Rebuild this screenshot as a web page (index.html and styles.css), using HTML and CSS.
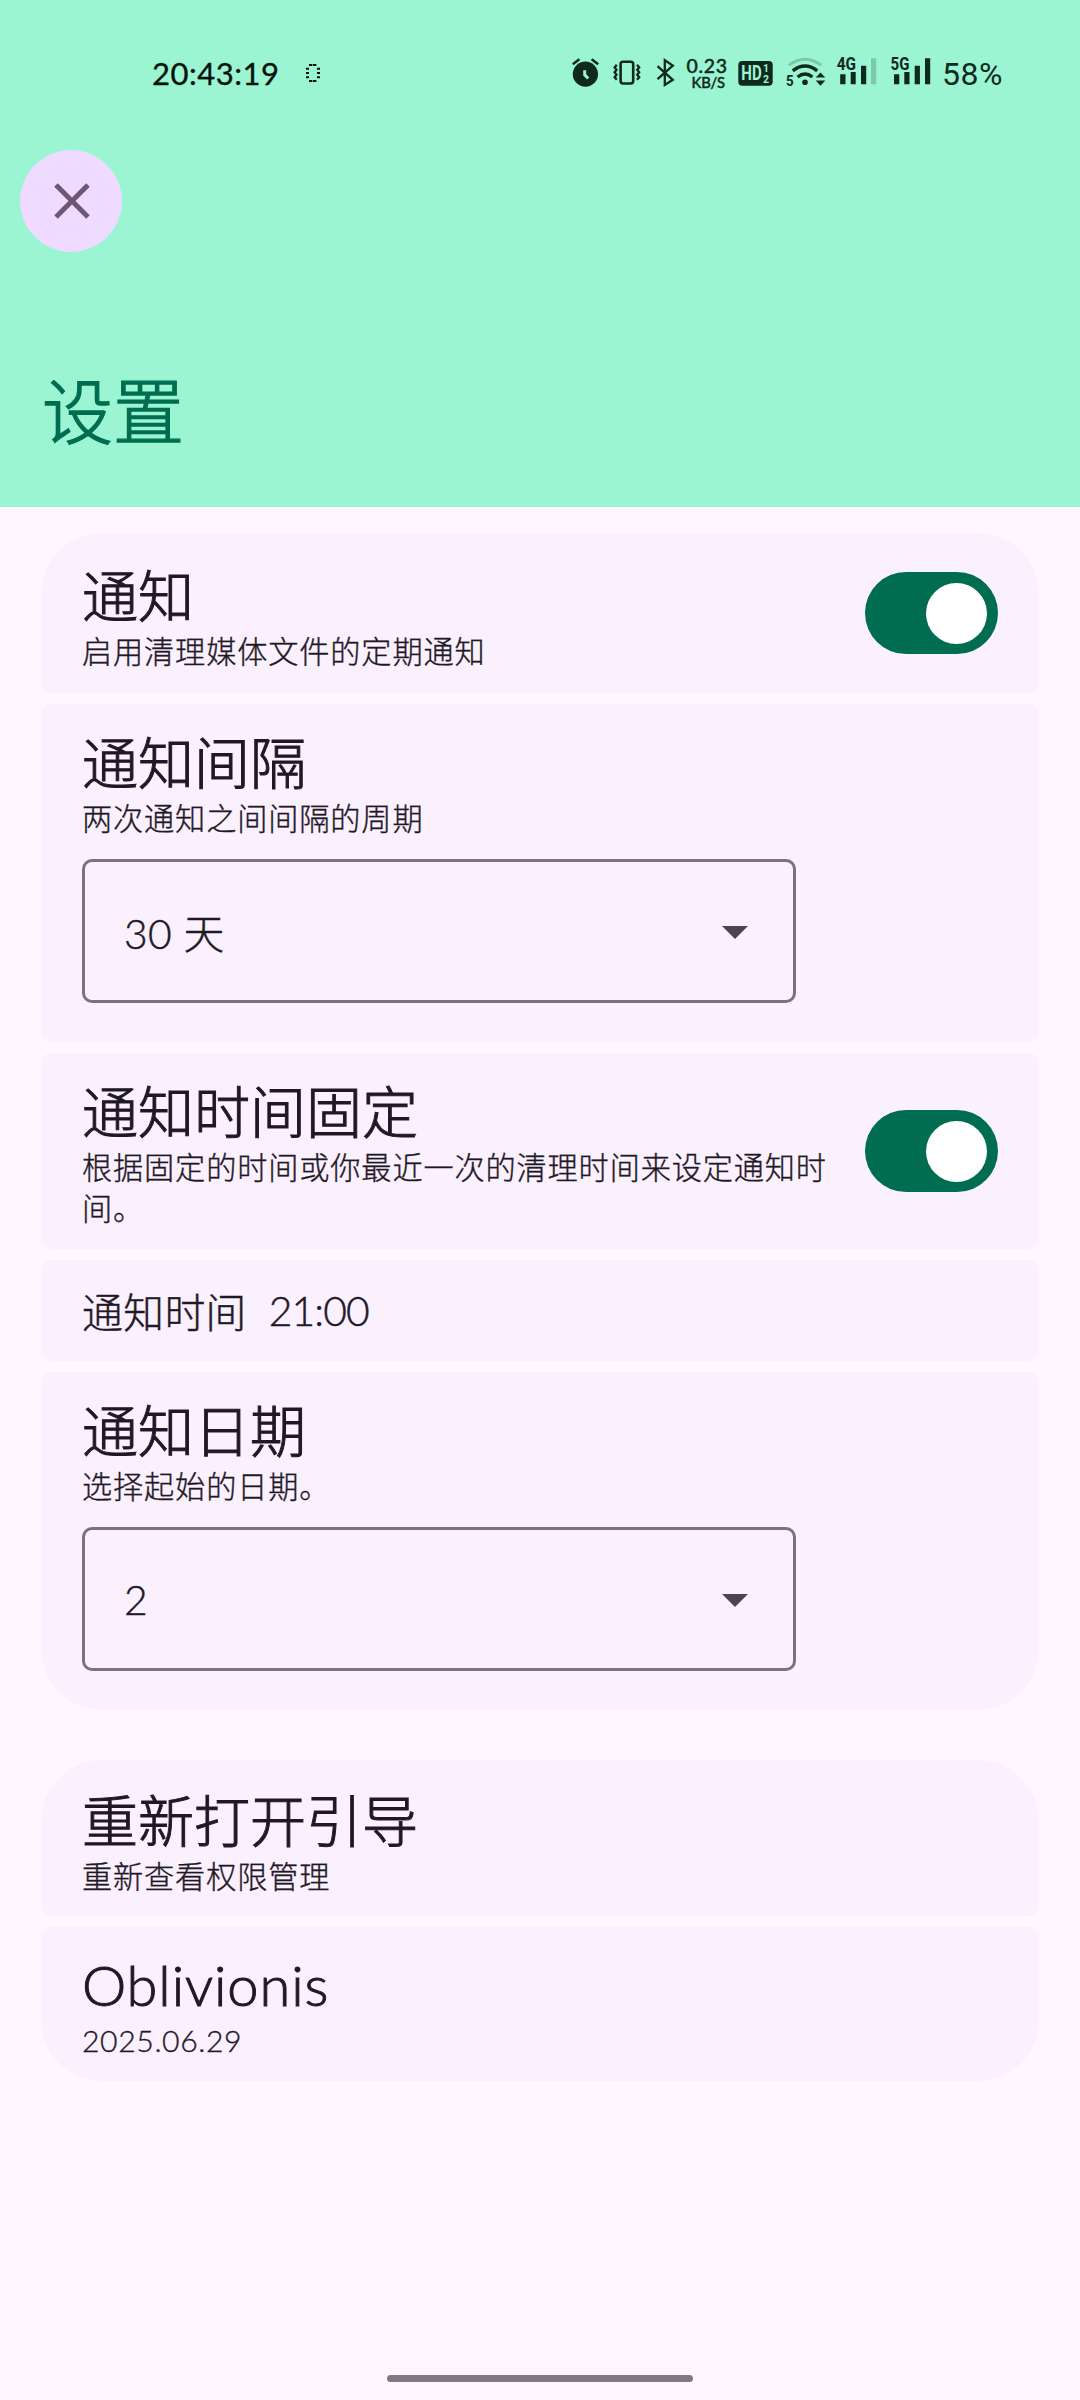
FILE: index.html
```html
<!DOCTYPE html>
<html lang="zh-CN">
<head>
<meta charset="utf-8">
<title>设置</title>
<link rel="stylesheet" href="styles.css">
</head>
<body>
<header class="top">
  <div class="status">
    <span class="clock">20:43:19</span>
    <svg class="dots" width="16" height="20" viewBox="305 63 16 20"><path d="M309 65h8M309 81h8M306 68.8h3M317 68.8h3M306 73h3M317 73h3M306 77.2h3M317 77.2h3" stroke-dasharray="3.2 .6"/></svg>
    <div class="tray">
      <svg width="42" height="50" viewBox="566 50 42 50"><circle cx="585.4" cy="74.2" r="12.6"/><path class="line" d="M572.8 64.2l6.6-5M591.6 59.2l6.6 5" stroke-width="2.6"/><path class="cut" d="M584.7 70.3v4.6l3.5 3.6" stroke-width="3"/></svg>
      <svg width="44" height="50" viewBox="608 50 44 50"><rect class="line" x="620.6" y="61.7" width="12.6" height="21.8" rx="2.4" stroke-width="2.6"/><path class="line" d="M616.8 64.8l-2.2 2.6 2 2.4-2 2.5 2 2.4-2 2.5 2.2 2.6M637 64.8l2.2 2.6-2 2.4 2 2.5-2 2.4 2 2.5-2.2 2.6" stroke-width="2.3"/></svg>
      <svg width="32" height="50" viewBox="652 50 32 50"><path class="line" d="M657.5 66.2l15.3 13.6-8 5.2V60.2l8 5.4-15.3 13.6" stroke-width="2.3"/></svg>
      <svg width="50" height="50" viewBox="684 50 50 50"><text class="lato" x="686.5" y="72.8" font-size="19.5" textLength="40.5">0.23</text><text class="lato" x="691.5" y="88" font-size="14.8" textLength="33.5">KB/S</text></svg>
      <svg width="48" height="50" viewBox="734 50 48 50"><rect x="738.3" y="61" width="34.4" height="24.7" rx="4"/><g class="paper"><text class="bold" x="741.3" y="80.4" font-size="20" textLength="20.4" lengthAdjust="spacingAndGlyphs">HD</text><text class="bold" x="763" y="72.2" font-size="10.5">1</text><text class="bold" x="763" y="83.4" font-size="10.5">2</text></g></svg>
      <svg width="50" height="50" viewBox="782 50 50 50"><path class="line pale" d="M788.8 65.1q16.2-11.8 32.4 0" stroke-width="3"/><path class="line" d="M792.8 70.8q12.2-9.4 24.4 0M797.6 77q7.4-6 14.8 0" stroke-width="3.4"/><circle cx="805" cy="82.3" r="2.8"/><text class="bold" x="786" y="85.6" font-size="15" textLength="7.6" lengthAdjust="spacingAndGlyphs">5</text><path d="M815.7 77.6l4.8-5.2 4.8 5.2zM815.7 80.6h9.6l-4.8 5.2z"/></svg>
      <svg width="54" height="50" viewBox="832 50 54 50"><text class="bold" x="836.7" y="70.2" font-size="17.5" textLength="19.3" lengthAdjust="spacingAndGlyphs">4G</text><path d="M840.2 74.3h5.3v10h-5.3zM850.7 72h5v12.3h-5zM861 65.7h5.2v18.6H861z"/><path class="palefill" d="M871 58.3h5.2v26H871z"/></svg>
      <svg width="54" height="50" viewBox="886 50 54 50"><text class="bold" x="890.6" y="70.2" font-size="17.5" textLength="18.8" lengthAdjust="spacingAndGlyphs">5G</text><path d="M894 74.3h5.3v10H894zM904.3 72h5.2v12.3h-5.2zM914.7 65.7h5.2v18.6h-5.2zM925 58.3h5.2v26H925z"/></svg>
      <span class="battery">58%</span>
    </div>
  </div>
  <button class="close" aria-label="关闭"><svg width="36" height="36" viewBox="0 0 36 36"><path d="M2 2l32 32M34 2L2 34"/></svg></button>
  <h1 class="heading">设置</h1>
</header>
<main class="content">
  <section class="group">
    <div class="card split card-notify">
      <div><h2 class="title">通知</h2><p class="desc">启用清理媒体文件的定期通知</p></div>
      <span class="switch"><span class="knob"></span></span>
    </div>
    <div class="card">
      <h2 class="title">通知间隔</h2><p class="desc">两次通知之间间隔的周期</p>
      <div class="select"><span>30 天</span><svg width="26" height="13" viewBox="0 0 26 13"><path d="M0 0h26L13 13z"/></svg></div>
    </div>
    <div class="card split card-fixed">
      <div><h2 class="title">通知时间固定</h2><p class="desc">根据固定的时间或你最近一次的清理时间来设定通知时间。</p></div>
      <span class="switch"><span class="knob"></span></span>
    </div>
    <div class="card card-time"><span>通知时间</span><span class="time">21:00</span></div>
    <div class="card">
      <h2 class="title">通知日期</h2><p class="desc">选择起始的日期。</p>
      <div class="select"><span>2</span><svg width="26" height="13" viewBox="0 0 26 13"><path d="M0 0h26L13 13z"/></svg></div>
    </div>
  </section>
  <section class="group">
    <div class="card card-plain"><h2 class="title">重新打开引导</h2><p class="desc">重新查看权限管理</p></div>
    <div class="card card-about"><h2 class="title app-name">Oblivionis</h2><p class="desc date">2025.06.29</p></div>
  </section>
</main>
<footer class="nav"><span class="pill"></span></footer>
</body>
</html>
```
FILE: styles.css
```css
* { box-sizing: border-box; }
body {
  margin: 0;
  width: 1080px;
  height: 2400px;
  display: flex;
  flex-direction: column;
  background: #fef7ff;
  color: #1f1926;
  font-family: Lato, "Noto Sans CJK SC", sans-serif;
  font-weight: 300;
}
h1, h2, p { margin: 0; font-weight: 300; }
svg { display: block; flex: none; }

.top { height: 507px; background: #9bf5d2; }
.status {
  height: 150px;
  padding: 48px 0 0 152px;
  display: flex;
  align-items: flex-start;
  color: #06120c;
}
.clock {
  width: 153px;
  line-height: 50px;
  font-size: 31px;
  font-weight: 400;
  letter-spacing: .5px;
  -webkit-text-stroke: .35px currentColor;
}
.dots { margin-top: 15px; }
.dots path { stroke: #06120c; stroke-width: 2; }
.tray {
  display: flex;
  margin: 2px 0 0 245px;
  color: #10291f;
}
.tray svg { fill: #10291f; }
.tray .line { fill: none; stroke: #10291f; }
.tray .pale { stroke: #7cc9aa; }
.tray .palefill { fill: #7cc9aa; }
.tray .cut { fill: none; stroke: #9bf5d2; }
.tray text { font-family: Roboto, sans-serif; font-weight: 500; }
.tray .bold { font-weight: 700; }
.tray .lato { font-family: Lato, sans-serif; stroke: #10291f; stroke-width: .4px; }
.tray .paper { fill: #9bf5d2; }
.battery {
  margin-left: 2px;
  font: 400 32px/49px Roboto, sans-serif;
  letter-spacing: .5px;
}
.close {
  width: 102px;
  height: 102px;
  margin: 0 0 0 20px;
  padding: 0 0 0 1px;
  border: 0;
  border-radius: 50%;
  background: #efdbff;
  display: flex;
  align-items: center;
  justify-content: center;
}
.close path { fill: none; stroke: #6e5676; stroke-width: 5; }
.heading {
  margin: 109px 0 0 42px;
  font-size: 71px;
  line-height: 100px;
  color: #006d50;
  -webkit-text-stroke: 1.3px currentColor;
}

.content {
  flex: 1;
  padding: 26px 41px 0;
  display: flex;
  flex-direction: column;
  gap: 50px;
}
.group { display: flex; flex-direction: column; gap: 11px; }
.card {
  padding: 23px 41px 39px;
  border-radius: 10px;
  background: #faf0fe;
}
.card:first-child { border-top-left-radius: 61px; border-top-right-radius: 61px; }
.card:last-child { border-bottom-left-radius: 61px; border-bottom-right-radius: 61px; }
.split { display: flex; justify-content: space-between; align-items: flex-start; }
.card-notify { height: 160px; padding-top: 27px; padding-bottom: 0; }
.card-fixed { height: 196px; padding-top: 23px; padding-bottom: 0; }
.split .switch { margin-top: 12px; }
.card-fixed .switch { margin-top: 34px; }
.card-time {
  height: 101px;
  padding-top: 0;
  padding-bottom: 0;
  display: flex;
  align-items: center;
  gap: 22px;
  font-size: 40.8px;
  letter-spacing: .4px;
  -webkit-text-stroke: .45px currentColor;
}
.time { letter-spacing: -.9px; }
.card-plain { padding-top: 25px; padding-bottom: 19px; }
.card-about { padding-top: 22px; padding-bottom: 20px; }
.title {
  font-size: 56px;
  line-height: 71px;
  -webkit-text-stroke: 1px currentColor;
}
.app-name { letter-spacing: .9px; }
.desc {
  font-size: 30.2px;
  line-height: 41px;
  letter-spacing: .85px;
  -webkit-text-stroke: .35px currentColor;
}
.date { letter-spacing: .6px; }
.split .desc { max-width: 750px; }

.switch {
  width: 133px;
  height: 82px;
  padding: 10px 11px;
  border-radius: 41px;
  background: #006d50;
  display: flex;
  justify-content: flex-end;
  align-items: center;
  flex: none;
}
.knob { width: 61px; height: 61px; border-radius: 50%; background: #fff; }

.select {
  width: 714px;
  height: 144px;
  margin-top: 20px;
  padding: 0 45px 0 39px;
  border: 3px solid #7d7080;
  border-radius: 10px;
  display: flex;
  align-items: center;
  justify-content: space-between;
  font-size: 40.8px;
  letter-spacing: .4px;
  -webkit-text-stroke: .45px currentColor;
}
.select svg { margin-top: 2px; }
.select path { fill: #4b4453; }

.nav { height: 25px; display: flex; justify-content: center; }
.pill { width: 306px; height: 7px; border-radius: 4px; background: #827a82; }
```
